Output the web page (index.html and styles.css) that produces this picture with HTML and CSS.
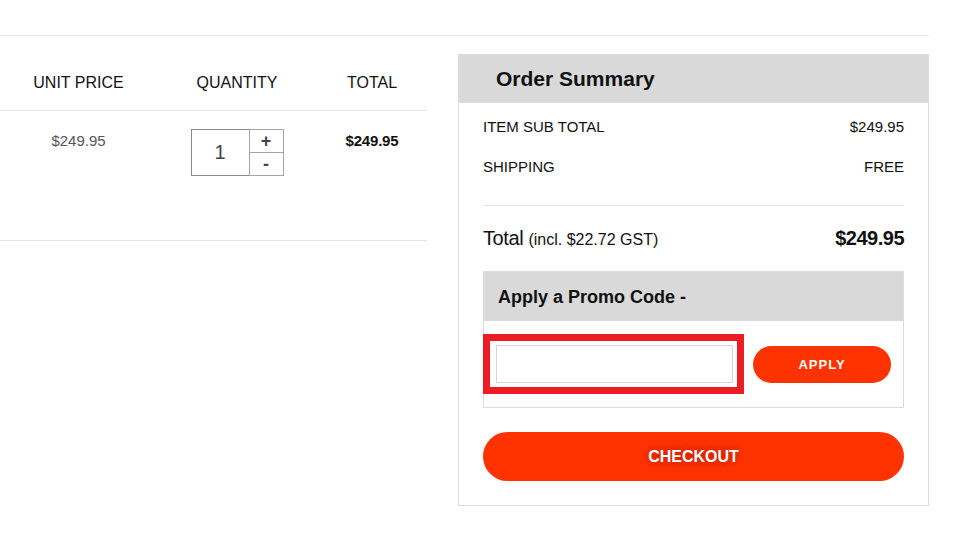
FILE: index.html
```html
<!DOCTYPE html>
<html lang="en">
<head>
    <meta charset="UTF-8">
    <meta name="viewport" content="width=device-width, initial-scale=1.0">
    <title>Shopping Cart</title>
    <link rel="stylesheet" href="styles.css">
</head>
<body>
    <div class="cart-page">
        <div class="cart-items">
            <table class="cart-table">
                <thead>
                    <tr>
                        <th class="col-price">UNIT PRICE</th>
                        <th class="col-qty">QUANTITY</th>
                        <th class="col-total">TOTAL</th>
                    </tr>
                </thead>
                <tbody>
                    <tr>
                        <td class="unit-price">$249.95</td>
                        <td class="qty-cell">
                            <div class="qty-control">
                                <input class="qty-input" type="text" value="1">
                                <div class="qty-buttons">
                                    <button class="qty-btn">+</button>
                                    <button class="qty-btn">-</button>
                                </div>
                            </div>
                        </td>
                        <td class="line-total">$249.95</td>
                    </tr>
                </tbody>
            </table>
        </div>

        <div class="order-summary">
            <div class="summary-title">Order Summary</div>
            <div class="summary-body">
                <div class="summary-row">
                    <span>ITEM SUB TOTAL</span>
                    <span>$249.95</span>
                </div>
                <div class="summary-row">
                    <span>SHIPPING</span>
                    <span>FREE</span>
                </div>
                <div class="summary-total">
                    <span class="total-label">Total <small>(incl. $22.72 GST)</small></span>
                    <span class="total-value">$249.95</span>
                </div>

                <div class="promo-box">
                    <div class="promo-title">Apply a Promo Code -</div>
                    <div class="promo-body">
                        <div class="promo-highlight">
                            <input class="promo-input" type="text">
                        </div>
                        <button class="apply-btn">APPLY</button>
                    </div>
                </div>

                <button class="checkout-btn">CHECKOUT</button>
            </div>
        </div>
    </div>
</body>
</html>
```

FILE: styles.css
```css
body {
    margin: 0;
    font-family: "Liberation Sans", Arial, sans-serif;
    color: #111;
    background: #fff;
}

.cart-page {
    display: flex;
    align-items: flex-start;
    width: 929px;
    margin-top: 35px;
    border-top: 1px solid #e8e8e8;
}

.cart-items {
    width: 427px;
}

.cart-table {
    width: 427px;
    border-collapse: collapse;
}

.cart-table th {
    padding: 38px 0 18px;
    font-size: 16px;
    line-height: 18px;
    font-weight: normal;
    text-align: center;
    border-bottom: 1px solid #e5e5e5;
}

.col-price { width: 157px; }
.col-qty { width: 160px; }
.col-total { width: 110px; }

.cart-table td {
    height: 130px;
    box-sizing: border-box;
    padding: 22px 0 0;
    vertical-align: top;
    text-align: center;
    font-size: 15px;
    line-height: 16px;
    border-bottom: 1px solid #e5e5e5;
}

.unit-price {
    color: #555;
}

.cart-table td.line-total {
    font-weight: bold;
    letter-spacing: -0.2px;
}

.cart-table td.qty-cell {
    padding-top: 18px;
}

.qty-control {
    display: inline-flex;
    vertical-align: top;
}

.qty-input {
    width: 59px;
    height: 47px;
    box-sizing: border-box;
    border: 1px solid #888;
    text-align: center;
    font-family: inherit;
    font-size: 20px;
    color: #444;
    padding: 0;
}

.qty-buttons {
    display: flex;
    flex-direction: column;
}

.qty-btn {
    width: 35px;
    height: 24px;
    margin-left: -1px;
    border: 1px solid #a5a5a5;
    background: #fff;
    font-family: inherit;
    font-size: 18px;
    font-weight: bold;
    color: #444;
    line-height: 1;
    padding: 0;
}

.qty-btn + .qty-btn {
    margin-top: -1px;
}

.order-summary {
    width: 471px;
    box-sizing: border-box;
    margin: 18px 0 0 31px;
    border: 1px solid #dcdcdc;
}

.summary-title {
    background: #d9d9d9;
    height: 48px;
    line-height: 48px;
    padding-left: 37px;
    font-size: 21px;
    font-weight: bold;
}

.summary-body {
    padding: 3px 24px 24px;
}

.summary-row {
    display: flex;
    justify-content: space-between;
    align-items: center;
    height: 40px;
    font-size: 15px;
}

.summary-total {
    display: flex;
    justify-content: space-between;
    align-items: center;
    height: 65px;
    margin-top: 19px;
    border-top: 1px solid #e5e5e5;
}

.total-label {
    font-size: 20px;
    letter-spacing: -0.4px;
}

.total-label small {
    font-size: 16px;
    letter-spacing: 0;
}

.total-value {
    font-size: 20px;
    font-weight: bold;
    letter-spacing: -0.5px;
}

.promo-box {
    border: 1px solid #dcdcdc;
}

.promo-title {
    background: #d9d9d9;
    height: 49px;
    line-height: 50px;
    padding-left: 14px;
    font-size: 18px;
    font-weight: bold;
}

.promo-body {
    display: flex;
    align-items: center;
    gap: 9px;
    padding: 13px 0;
}

.promo-highlight {
    margin-left: -1px;
    border: 7px solid #ec1c24;
    padding: 4px 4px 4px 6px;
    background: #fff;
}

.promo-input {
    display: block;
    width: 237px;
    height: 38px;
    box-sizing: border-box;
    border: 1px solid #d4d4d4;
    margin: 0;
}

.apply-btn {
    width: 138px;
    height: 37px;
    border: none;
    border-radius: 19px;
    background: #ff3300;
    color: #fff;
    font-family: inherit;
    font-size: 13px;
    font-weight: bold;
    letter-spacing: 1px;
}

.checkout-btn {
    display: block;
    width: 100%;
    height: 49px;
    margin-top: 24px;
    border: none;
    border-radius: 25px;
    background: #ff3300;
    color: #fff;
    font-family: inherit;
    font-size: 16px;
    font-weight: bold;
    text-shadow: 0 0 10px rgba(110, 0, 0, 0.7);
}
```
